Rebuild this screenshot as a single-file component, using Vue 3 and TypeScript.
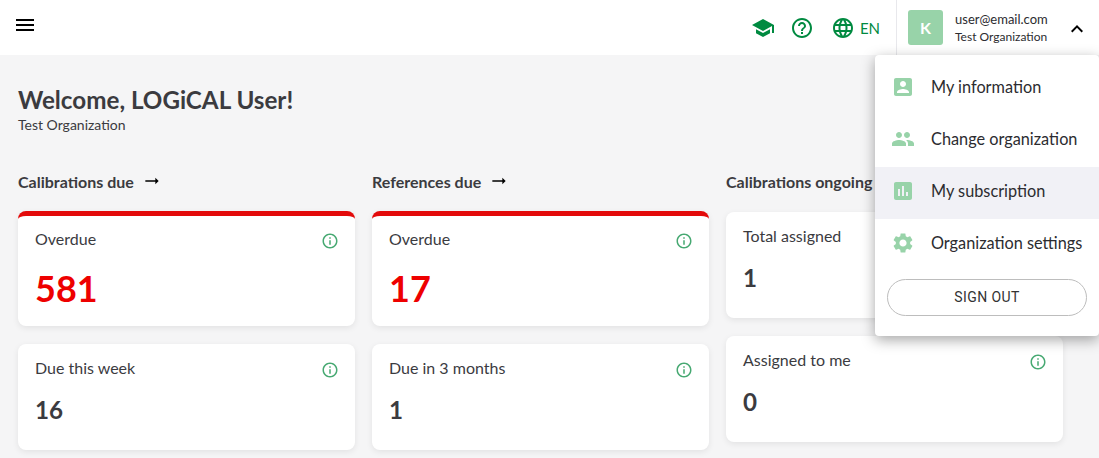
<script setup lang="ts">
interface Stat {
  label: string;
  value: number;
  alert?: boolean;
}

interface Column {
  title: string;
  arrow: boolean;
  stats: Stat[];
}

const columns: Column[] = [
  {
    title: 'Calibrations due',
    arrow: true,
    stats: [
      { label: 'Overdue', value: 581, alert: true },
      { label: 'Due this week', value: 16 },
    ],
  },
  {
    title: 'References due',
    arrow: true,
    stats: [
      { label: 'Overdue', value: 17, alert: true },
      { label: 'Due in 3 months', value: 1 },
    ],
  },
  {
    title: 'Calibrations ongoing',
    arrow: false,
    stats: [
      { label: 'Total assigned', value: 1 },
      { label: 'Assigned to me', value: 0 },
    ],
  },
];

const menuItems = [
  {
    label: 'My information',
    path: 'M3 5v14c0 1.1.89 2 2 2h14c1.1 0 2-.9 2-2V5c0-1.1-.9-2-2-2H5c-1.11 0-2 .9-2 2zm12 4c0 1.66-1.34 3-3 3s-3-1.34-3-3 1.34-3 3-3 3 1.34 3 3zm-9 8c0-2 4-3.1 6-3.1s6 1.1 6 3.1v1H6v-1z',
  },
  {
    label: 'Change organization',
    path: 'M16 11c1.66 0 2.99-1.34 2.99-3S17.66 5 16 5c-1.66 0-3 1.34-3 3s1.34 3 3 3zm-8 0c1.66 0 2.99-1.34 2.99-3S9.66 5 8 5C6.34 5 5 6.34 5 8s1.34 3 3 3zm0 2c-2.33 0-7 1.17-7 3.5V19h14v-2.5c0-2.33-4.67-3.5-7-3.5zm8 0c-.29 0-.62.02-.97.05 1.16.84 1.97 1.97 1.97 3.45V19h6v-2.5c0-2.33-4.67-3.5-7-3.5z',
  },
  {
    label: 'My subscription',
    active: true,
    path: 'M19 3H5c-1.1 0-2 .9-2 2v14c0 1.1.9 2 2 2h14c1.1 0 2-.9 2-2V5c0-1.1-.9-2-2-2zM9 17H7v-7h2v7zm4 0h-2V7h2v10zm4 0h-2v-4h2v4z',
  },
  {
    label: 'Organization settings',
    path: 'M19.14 12.94c.04-.3.06-.61.06-.94 0-.32-.02-.64-.07-.94l2.03-1.58c.18-.14.23-.41.12-.61l-1.92-3.32c-.12-.22-.37-.29-.59-.22l-2.39.96c-.5-.38-1.03-.7-1.62-.94l-.36-2.54c-.04-.24-.24-.41-.48-.41h-3.84c-.24 0-.43.17-.47.41l-.36 2.54c-.59.24-1.13.57-1.62.94l-2.39-.96c-.22-.08-.47 0-.59.22L2.74 8.87c-.12.21-.08.47.12.61l2.03 1.58c-.05.3-.09.63-.09.94s.02.64.07.94l-2.03 1.58c-.18.14-.23.41-.12.61l1.92 3.32c.12.22.37.29.59.22l2.39-.96c.5.38 1.03.7 1.62.94l.36 2.54c.05.24.24.41.48.41h3.84c.24 0 .44-.17.47-.41l.36-2.54c.59-.24 1.13-.56 1.62-.94l2.39.96c.22.08.47 0 .59-.22l1.92-3.32c.12-.22.07-.47-.12-.61l-2.01-1.58zM12 15.6c-1.98 0-3.6-1.62-3.6-3.6s1.62-3.6 3.6-3.6 3.6 1.62 3.6 3.6-1.62 3.6-3.6 3.6z',
  },
];
</script>

<template>
  <div class="page">
    <header class="topbar">
      <svg class="burger" viewBox="0 0 24 24" width="24" height="24">
        <path d="M3 18h18v-2H3v2zm0-5h18v-2H3v2zm0-7v2h18V6H3z" />
      </svg>
      <div class="actions">
        <svg class="green-icon" viewBox="0 0 24 24" width="24" height="24">
          <path d="M5 13.18v4L12 21l7-3.82v-4L12 17l-7-3.82zM12 3L1 9l11 6 9-4.91V17h2V9L12 3z" />
        </svg>
        <svg class="green-icon help" viewBox="0 0 24 24" width="24" height="24">
          <path d="M11 18h2v-2h-2v2zm1-16C6.48 2 2 6.48 2 12s4.48 10 10 10 10-4.48 10-10S17.52 2 12 2zm0 18c-4.41 0-8-3.59-8-8s3.59-8 8-8 8 3.59 8 8-3.59 8-8 8zm0-14c-2.21 0-4 1.79-4 4h2c0-1.1.9-2 2-2s2 .9 2 2c0 2-3 1.75-3 5h2c0-2.25 3-2.5 3-5 0-2.21-1.79-4-4-4z" />
        </svg>
        <div class="lang">
          <svg class="green-icon" viewBox="0 0 24 24" width="24" height="24">
            <path d="M11.99 2C6.47 2 2 6.48 2 12s4.47 10 9.99 10C17.52 22 22 17.52 22 12S17.52 2 11.99 2zm6.93 6h-2.95c-.32-1.25-.78-2.45-1.38-3.56 1.84.63 3.37 1.91 4.33 3.56zM12 4.04c.83 1.2 1.48 2.53 1.91 3.96h-3.82c.43-1.43 1.08-2.76 1.91-3.96zM4.26 14C4.1 13.36 4 12.69 4 12s.1-1.36.26-2h3.38c-.08.66-.14 1.32-.14 2 0 .68.06 1.34.14 2H4.26zm.82 2h2.95c.32 1.25.78 2.45 1.38 3.56-1.84-.63-3.37-1.9-4.33-3.56zm2.95-8H5.08c.96-1.66 2.49-2.93 4.33-3.56C8.81 5.55 8.35 6.75 8.03 8zM12 19.96c-.83-1.2-1.48-2.53-1.91-3.96h3.82c-.43 1.43-1.08 2.76-1.91 3.96zM14.34 14H9.66c-.09-.66-.16-1.32-.16-2 0-.68.07-1.35.16-2h4.68c.09.65.16 1.32.16 2 0 .68-.07 1.34-.16 2zm.25 5.56c.6-1.11 1.06-2.31 1.38-3.56h2.95c-.96 1.65-2.49 2.93-4.33 3.56zM16.36 14c.08-.66.14-1.32.14-2 0-.68-.06-1.34-.14-2h3.38c.16.64.26 1.31.26 2s-.1 1.36-.26 2h-3.38z" />
          </svg>
          <span>EN</span>
        </div>
      </div>
      <div class="account">
        <div class="avatar">K</div>
        <div class="account-text">
          <div class="email">user@email.com</div>
          <div class="org">Test Organization</div>
        </div>
        <svg class="chevron" viewBox="0 0 24 24" width="24" height="24">
          <path d="M12 8l-6 6 1.41 1.41L12 10.83l4.59 4.58L18 14z" />
        </svg>
      </div>
    </header>

    <main class="content">
      <h1>Welcome, LOGiCAL User!</h1>
      <p class="subtitle">Test Organization</p>
      <div class="columns">
        <section v-for="col in columns" :key="col.title" class="column">
          <div class="col-title">
            <span>{{ col.title }}</span>
            <svg v-if="col.arrow" class="arrow" viewBox="0 0 24 24" width="20" height="20">
              <path d="M16.01 11H4v2h12.01v3L20 12l-3.99-4z" />
            </svg>
          </div>
          <div
            v-for="stat in col.stats"
            :key="stat.label"
            class="card"
            :class="{ alert: stat.alert }"
          >
            <div class="card-head">
              <span>{{ stat.label }}</span>
              <svg class="info" viewBox="0 0 24 24" width="18" height="18">
                <path d="M11 7h2v2h-2zm0 4h2v6h-2zm1-9C6.48 2 2 6.48 2 12s4.48 10 10 10 10-4.48 10-10S17.52 2 12 2zm0 18c-4.41 0-8-3.59-8-8s3.59-8 8-8 8 3.59 8 8-3.59 8-8 8z" />
              </svg>
            </div>
            <div class="value">{{ stat.value }}</div>
          </div>
        </section>
      </div>
    </main>

    <div class="menu">
      <div v-for="item in menuItems" :key="item.label" class="menu-item" :class="{ active: item.active }">
        <svg viewBox="0 0 24 24" width="24" height="24">
          <path :d="item.path" />
        </svg>
        <span>{{ item.label }}</span>
      </div>
      <button class="sign-out" type="button">SIGN OUT</button>
    </div>
  </div>
</template>

<style scoped>
.page {
  position: relative;
  height: 458px;
  overflow: hidden;
  background: #f5f5f6;
  font-family: Lato, "Liberation Sans", sans-serif;
  color: #3b3b3f;
}

.topbar {
  display: flex;
  align-items: center;
  height: 55px;
  padding-left: 13px;
  background: #fff;
}

.burger {
  margin-bottom: 5px;
  fill: #000;
}

.actions {
  display: flex;
  align-items: center;
  margin-left: auto;
  margin-right: 16px;
}

.green-icon {
  fill: #008a40;
  display: block;
}

.help {
  margin-left: 15px;
}

.lang {
  display: flex;
  align-items: center;
  gap: 5px;
  margin-left: 17px;
  font-size: 15px;
  color: #008a40;
}

.account {
  display: flex;
  align-items: center;
  align-self: stretch;
  width: 203px;
  padding-left: 11px;
  border-left: 1px solid #e8e8ec;
  box-sizing: border-box;
}

.avatar {
  display: flex;
  align-items: center;
  justify-content: center;
  width: 35px;
  height: 35px;
  border-radius: 3px;
  background: #98d3a9;
  color: #fff;
  font-size: 16px;
  font-weight: 700;
}

.account-text {
  margin-left: 12px;
  font-size: 13px;
  line-height: 18px;
  color: #2c2c30;
}

.org {
  font-size: 12px;
}

.chevron {
  margin: 2px 0 0 17px;
  fill: #000;
}

.content {
  padding: 28px 36px 0 18px;
}

h1 {
  margin: 0;
  font-size: 24.2px;
  line-height: 33px;
  font-weight: 700;
}

.subtitle {
  margin: 1px 0 0;
  font-size: 14px;
  line-height: 16px;
}

.columns {
  display: grid;
  grid-template-columns: repeat(3, 337px);
  gap: 17px;
  margin-top: 36px;
}

.col-title {
  display: flex;
  align-items: center;
  gap: 8px;
  height: 24px;
  margin-bottom: 19px;
  font-size: 16px;
  font-weight: 700;
}

.arrow {
  fill: #000;
}

.card {
  box-sizing: border-box;
  height: 106px;
  margin-bottom: 18px;
  padding: 14px 16px 0 17px;
  border-radius: 8px;
  background: #fff;
  box-shadow: 0 2px 6px rgba(0, 0, 0, 0.08);
}

.card.alert {
  height: 115px;
  margin-top: -1px;
  padding-top: 13px;
  border-top: 5px solid #e30a0a;
}

.card-head {
  display: flex;
  align-items: flex-start;
  justify-content: space-between;
  height: 20px;
  font-size: 16px;
  line-height: 20px;
}

.info {
  margin-top: 3px;
  fill: #47a972;
}

.value {
  margin-top: 16px;
  font-size: 24.2px;
  line-height: 32px;
  font-weight: 700;
}

.alert .value {
  margin-top: 16px;
  font-size: 36px;
  line-height: 46px;
  color: #ee0000;
}

.menu {
  position: absolute;
  top: 55px;
  right: 0;
  width: 224px;
  height: 281px;
  box-sizing: border-box;
  padding-top: 8px;
  border-radius: 4px;
  background: #fff;
  box-shadow: 0 4px 14px rgba(0, 0, 0, 0.35);
}

.menu-item {
  display: flex;
  align-items: center;
  gap: 16px;
  box-sizing: border-box;
  height: 52px;
  padding: 0 0 4px 16px;
  font-size: 16.3px;
  color: #2c2c30;
}

.menu-item span {
  margin-bottom: 2px;
}

.menu-item svg {
  fill: #98d3a9;
}

.menu-item.active {
  background: #f1f1f6;
}

.sign-out {
  display: block;
  width: 200px;
  height: 37px;
  margin: 8px 0 0 12px;
  padding-bottom: 2px;
  border: 1px solid #bdbdbd;
  border-radius: 19px;
  background: #fff;
  font-family: Roboto, "Liberation Sans", sans-serif;
  font-size: 14px;
  letter-spacing: 0.4px;
  color: #333;
}
</style>
